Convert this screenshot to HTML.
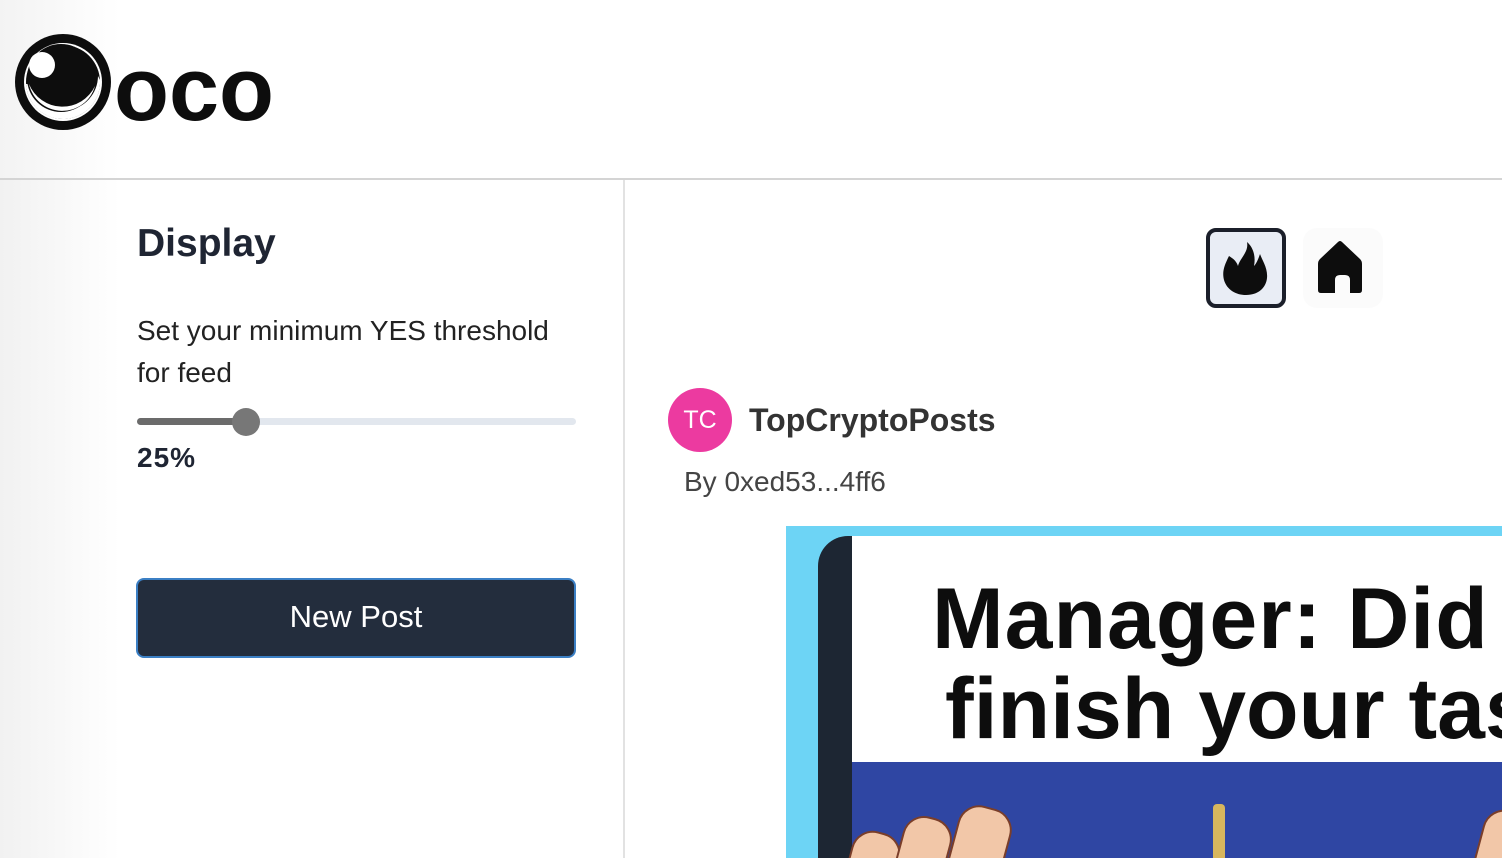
<!DOCTYPE html>
<html><head><meta charset="utf-8"><style>
*{margin:0;padding:0;box-sizing:border-box}
html,body{width:1502px;height:858px;overflow:hidden}
body{background:#fff;font-family:"Liberation Sans",sans-serif;position:relative}
.header{position:absolute;left:0;top:0;width:1502px;height:180px;background:linear-gradient(90deg,#f3f3f3 0,#fff 120px);border-bottom:2px solid #d4d4d4}
.side{position:absolute;left:0;top:180px;width:625px;height:678px;background:linear-gradient(90deg,#f1f1f1 0,#fff 120px);border-right:2px solid #e2e2e2}
.abs{position:absolute}
.f{position:absolute;background:#f2c7a8;border:2px solid #7a3e2a;border-radius:22px 22px 4px 4px;transform:rotate(15deg)}
</style></head><body>
<div class="header">
<svg class="abs" style="left:15px;top:34px" width="98" height="98" viewBox="0 0 98 98">
<circle cx="48" cy="48" r="48" fill="#0d0d0d"/>
<circle cx="48" cy="48" r="39" fill="#fff"/>
<circle cx="48" cy="48" r="37" fill="#0d0d0d"/>
<path d="M11 50 A37 37 0 0 0 85 46 L83 42 A35 35 0 0 1 14 50 Z" fill="#fff"/>
<circle cx="46" cy="44" r="34" fill="#0d0d0d"/>
<path d="M14 50 A34 34 0 0 0 80 52 A36 36 0 0 1 14 50 Z" fill="#fff"/>
<circle cx="27" cy="31" r="13" fill="#fff"/>
</svg>
<div class="abs" style="left:114px;top:42px;font-size:90px;font-weight:bold;color:#0d0d0d;line-height:96px">oco</div>
</div>
<div class="side">
<div class="abs" style="left:137px;top:42px;font-size:39px;font-weight:bold;color:#1f2533">Display</div>
<div class="abs" style="left:137px;top:130px;font-size:28px;line-height:42px;color:#222;width:440px">Set your minimum YES threshold for feed</div>
<div class="abs" style="left:137px;top:238px;width:439px;height:7px;border-radius:4px;background:#e2e7ee"></div>
<div class="abs" style="left:137px;top:238px;width:110px;height:7px;border-radius:4px;background:#6b6b6b"></div>
<div class="abs" style="left:232px;top:228px;width:28px;height:28px;border-radius:50%;background:#777"></div>
<div class="abs" style="left:137px;top:262px;font-size:28px;font-weight:bold;color:#1f2533;letter-spacing:1px">25%</div>
<div class="abs" style="left:136px;top:398px;width:440px;height:80px;border-radius:8px;background:#232d3d;border:2px solid #3b7fc4;color:#fff;font-size:31px;text-align:center;line-height:74px">New Post</div>
</div>
<div class="abs" style="left:1206px;top:228px;width:80px;height:80px;border-radius:10px;background:#e9edf5;border:4px solid #1b1f2a"></div>
<svg class="abs" style="left:1216px;top:238px" width="60" height="60" viewBox="0 0 60 60">
<path d="M31 4 C33 14 24 20 22 28 C20 22 16 20 13 18 C8 28 6 34 8 42 C11 52 20 57 30 57 C42 57 50 50 51 40 C52 30 46 22 44 16 C42 22 40 26 38 28 C40 18 37 9 31 4 Z" fill="#0d0d0d"/>
</svg>
<div class="abs" style="left:1303px;top:228px;width:80px;height:80px;border-radius:14px;background:#fbfbfb"></div>
<svg class="abs" style="left:1313px;top:238px" width="60" height="60" viewBox="0 0 60 60">
<path d="M29 4 L47 21 Q49 23 49 26 L49 52 Q49 55 46 55 L37 55 L37 42 Q37 37 32 37 L27 37 Q22 37 22 42 L22 55 L8 55 Q5 55 5 52 L5 26 Q5 23 7 21 L25 4 Q27 2 29 4 Z" fill="#0d0d0d"/>
</svg>
<div class="abs" style="left:668px;top:388px;width:64px;height:64px;border-radius:50%;background:#ec3aa0;color:#fff;font-size:25px;text-align:center;line-height:64px">TC</div>
<div class="abs" style="left:749px;top:402px;font-size:32px;font-weight:bold;color:#333">TopCryptoPosts</div>
<div class="abs" style="left:684px;top:466px;font-size:28px;color:#444">By 0xed53...4ff6</div>
<div class="abs" style="left:786px;top:526px;width:716px;height:332px;background:#6dd4f5;overflow:hidden">
<div class="abs" style="left:32px;top:10px;width:700px;height:340px;background:#1d2633;border-radius:30px 0 0 0"></div>
<div class="abs" style="left:66px;top:10px;width:660px;height:226px;background:#fff"></div>
<div class="abs" style="left:66px;top:236px;width:660px;height:110px;background:#2f46a3"></div>
<div class="abs" style="left:146px;top:48px;font-size:86px;font-weight:bold;color:#0d0d0d;white-space:nowrap;letter-spacing:1px;line-height:90px">Manager: Did</div>
<div class="abs" style="left:159px;top:138px;font-size:86px;font-weight:bold;color:#0d0d0d;white-space:nowrap;letter-spacing:0px;line-height:90px">finish your tas</div>
<div class="f" style="left:60px;top:305px;width:50px;height:80px"></div>
<div class="f" style="left:110px;top:290px;width:50px;height:90px"></div>
<div class="f" style="left:165px;top:280px;width:55px;height:90px"></div>
<div class="abs" style="left:427px;top:278px;width:12px;height:60px;background:#d7b65d;border-radius:4px"></div>
<div class="f" style="left:690px;top:285px;width:60px;height:90px"></div>
</div>
</body></html>
